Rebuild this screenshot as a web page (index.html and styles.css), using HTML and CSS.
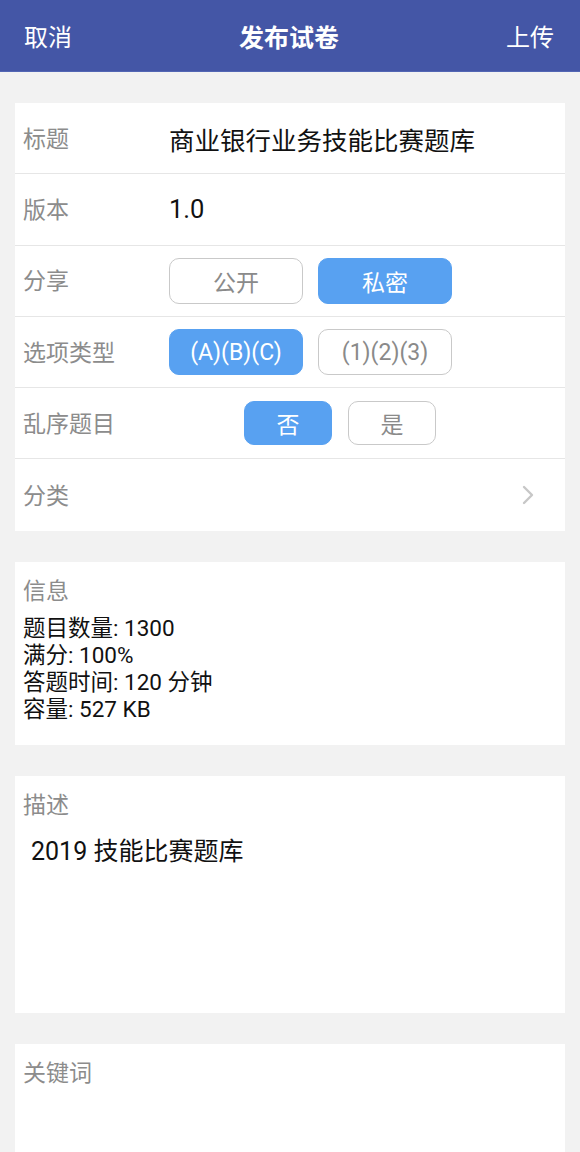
FILE: index.html
```html
<!DOCTYPE html>
<html lang="zh-CN">
<head>
    <meta charset="UTF-8">
    <title>发布试卷</title>
    <link rel="stylesheet" href="styles.css">
</head>
<body>
<div id="header">
    <span class="nav-btn">取消</span>
    <span class="nav-title">发布试卷</span>
    <span class="nav-btn">上传</span>
</div>
<div id="content">
    <ul class="card form">
        <li class="row">
            <span class="label">标题</span>
            <span class="value">商业银行业务技能比赛题库</span>
        </li>
        <li class="row">
            <span class="label">版本</span>
            <span class="value">1.0</span>
        </li>
        <li class="row">
            <span class="label">分享</span>
            <div class="options">
                <div class="opt">公开</div>
                <div class="opt on">私密</div>
            </div>
        </li>
        <li class="row">
            <span class="label">选项类型</span>
            <div class="options">
                <div class="opt on">(A)(B)(C)</div>
                <div class="opt">(1)(2)(3)</div>
            </div>
        </li>
        <li class="row">
            <span class="label">乱序题目</span>
            <div class="options shift">
                <div class="opt small on">否</div>
                <div class="opt small">是</div>
            </div>
        </li>
        <li class="row">
            <span class="label">分类</span>
            <svg class="arrow" width="12" height="20" viewBox="0 0 12 20">
                <polyline points="2,2 10,10 2,18" fill="none" stroke="#C7C7C7" stroke-width="2.4" stroke-linecap="round" stroke-linejoin="round"/>
            </svg>
        </li>
    </ul>
    <div class="card block" id="info">
        <div class="label">信息</div>
        <div class="info-text">
            题目数量: 1300<br>
            满分: 100%<br>
            答题时间: 120 分钟<br>
            容量: 527 KB
        </div>
    </div>
    <div class="card block" id="desc">
        <div class="label">描述</div>
        <div class="desc-text">2019 技能比赛题库</div>
    </div>
    <div class="card block" id="keywords">
        <div class="label">关键词</div>
    </div>
</div>
</body>
</html>
```

FILE: styles.css
```css
html, body, ul {
    margin: 0;
    padding: 0;
}
li {
    list-style: none;
}
body {
    background: #F2F2F2;
    font-family: "Roboto", "Noto Sans CJK SC", sans-serif;
    color: #1A1A1A;
    height: 1152px;
    overflow: hidden;
}
#header {
    height: 72px;
    background: #4456A6;
    color: #fff;
    display: flex;
    align-items: center;
    justify-content: space-between;
    padding: 0 26px 0 24px;
    border-bottom: 1px solid #5366B4;
    box-sizing: border-box;
}
#header .nav-btn {
    font-size: 24px;
}
#header .nav-title {
    font-size: 25px;
    font-weight: bold;
}
#content {
    display: flex;
    flex-direction: column;
    gap: 31px;
    padding: 31px 15px 0;
}
.card {
    background: #fff;
}
.row {
    display: flex;
    align-items: center;
    height: 71.3px;
    box-sizing: border-box;
    border-bottom: 1px solid #E6E6E6;
    padding-left: 8px;
}
.row:last-child {
    border-bottom: none;
}
.label {
    font-size: 23px;
    color: #8C8C8C;
    line-height: 30px;
}
.row .label {
    width: 146px;
    flex-shrink: 0;
    padding-top: 3px;
}
.value {
    font-size: 25.5px;
    color: #111;
}
.options {
    display: flex;
    gap: 15px;
}
.options.shift {
    margin-left: 75px;
    gap: 16px;
}
.opt {
    width: 134px;
    height: 46px;
    box-sizing: border-box;
    border: 1px solid #C9C9C9;
    border-radius: 10px;
    display: flex;
    align-items: center;
    justify-content: center;
    font-size: 23px;
    color: #8A8A8A;
}
.opt.small {
    width: 88px;
    height: 44px;
}
.opt.on {
    background: #58A1F1;
    border-color: #58A1F1;
    color: #fff;
}
.arrow {
    margin-left: auto;
    margin-right: 31px;
}
.block {
    padding: 15px 8px 0;
    box-sizing: border-box;
}
#info {
    height: 183px;
}
.info-text {
    margin-top: 8px;
    font-size: 22.5px;
    line-height: 27px;
    color: #111;
}
#desc {
    height: 237px;
}
.desc-text {
    margin-top: 15px;
    padding-left: 8px;
    font-size: 25px;
    line-height: 32px;
    color: #111;
}
#keywords {
    height: 140px;
}
```
